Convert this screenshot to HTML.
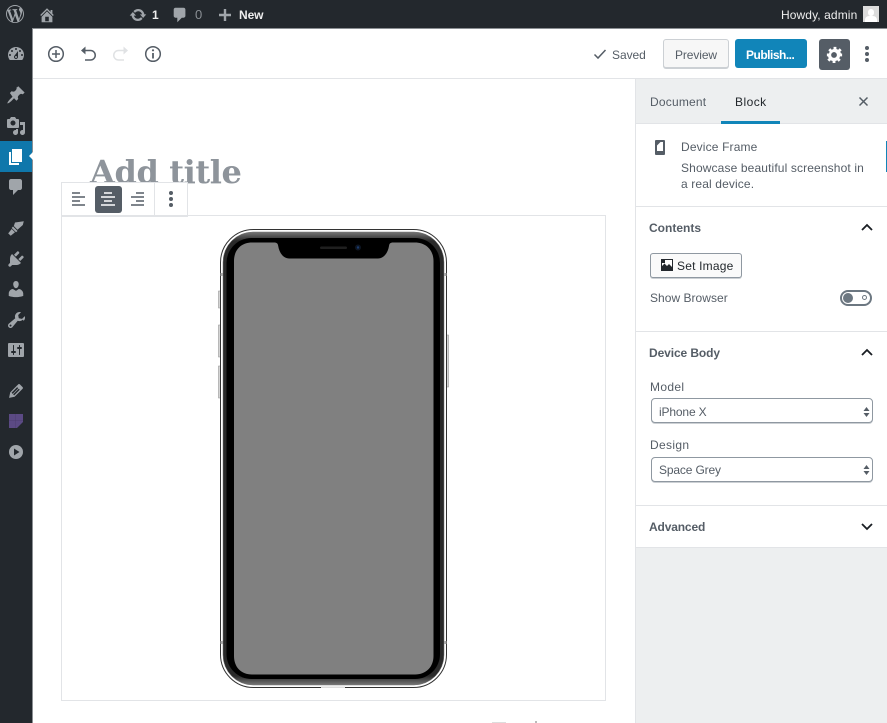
<!DOCTYPE html>
<html><head><meta charset="utf-8">
<style>
html,body{margin:0;padding:0;background:#fff}
body{width:887px;height:723px;position:relative;overflow:hidden;font-family:"Liberation Sans",sans-serif;color:#555d66;font-size:12px}
.a{position:absolute}
.t{position:absolute;white-space:nowrap;line-height:16px;letter-spacing:0}
svg{position:absolute;overflow:visible}
.m{fill:#a0a5aa;fill-rule:evenodd}
.line{position:absolute;background:#e2e4e7;height:1px}
.sel{position:absolute;left:651px;width:220px;height:23px;border:1px solid #8f98a1;border-radius:4px;background:#fff;box-shadow:0 1px 0 #ccd0d4}
</style></head><body>
<!-- Admin bar -->
<div class="a" style="left:0;top:0;width:887px;height:28px;background:#23282d"></div>
<div class="a" style="left:0;top:28px;width:32px;height:695px;background:#23282d"></div>
<div class="a" style="left:32px;top:28px;width:1px;height:695px;background:#8b8f93"></div>
<div class="a" style="left:32px;top:28px;width:855px;height:1px;background:#8b8f93"></div>
<svg style="left:6px;top:5px" width="18" height="18" viewBox="0 0 20 20"><path class="m" d="M20 10c0-5.510-4.490-10-10-10C4.480 0 0 4.490 0 10c0 5.520 4.480 10 10 10 5.510 0 10-4.480 10-10zM7.780 15.370L4.370 6.220c.55-.02 1.170-.08 1.170-.08.500-.06.440-1.130-.060-1.110 0 0-1.450.11-2.370.11-.180 0-.370 0-.580-.01C4.120 2.690 6.890 1.050 10 1.050c2.310 0 4.430.87 6.020 2.320-.040-.010-.080-.010-.120-.010-.870 0-1.490.76-1.490 1.580 0 .730.420 1.350.870 2.080.340.590.730 1.350.730 2.450 0 .760-.300 1.640-.680 2.860l-.890 2.970-3.220-9.570c.54-.03 1.020-.090 1.020-.090.500-.060.440-1.130-.060-1.110 0 0-1.450.11-2.370.11-.850 0-2.300-.110-2.300-.110-.500-.020-.560 1.080-.060 1.110l.920.080 1.260 3.410zM17.410 10c.240-.640.740-1.870.430-4.250.700 1.290 1.050 2.710 1.050 4.250 0 3.290-1.730 6.240-4.480 7.820.990-2.650 1.990-5.170 3-7.820zM6.100 18.090C3.120 16.650 1.110 13.530 1.110 10c0-1.300.230-2.480.72-3.590l4.270 11.680zm4.030-6.630l2.650 7.170c-.880.330-1.790.490-2.780.49-.810 0-1.620-.120-2.420-.380z"/></svg>
<svg style="left:38px;top:6px" width="18" height="18" viewBox="0 0 20 20"><path class="m" d="M16 8.500l1.530 1.530-1.060 1.060L10 4.620l-6.470 6.470-1.060-1.060L10 2.500l4 4v-2h2v4zm-6-2.460l6 5.990V18H4v-5.970zM12 17v-5H8v5h4z"/></svg>
<svg style="left:129px;top:6px" width="18" height="18" viewBox="0 0 20 20"><path class="m" d="M10.200 3.280c3.530 0 6.430 2.610 6.920 6h2.080l-3.500 4-3.500-4h2.320c-.450-1.970-2.210-3.440-4.320-3.440-1.450 0-2.730.710-3.540 1.790L4.950 5.660C6.230 4.200 8.110 3.280 10.200 3.280zm-.400 13.440c-3.520 0-6.430-2.610-6.920-6H.800l3.500-4c1.170 1.330 2.330 2.670 3.500 4H5.480c.450 1.970 2.210 3.440 4.320 3.440 1.450 0 2.730-.710 3.540-1.800l1.710 1.970c-1.280 1.460-3.150 2.390-5.250 2.390z"/></svg>
<div class="t" style="left:152px;top:7px;color:#eee;font-weight:bold;font-size:12px">1</div>
<svg style="left:171px;top:6px" width="18" height="18" viewBox="0 0 20 20"><path class="m" d="M5 2h9c1.100 0 2 .9 2 2v7c0 1.100-.9 2-2 2h-2l-5 5v-5H5c-1.100 0-2-.9-2-2V4c0-1.100.9-2 2-2z"/></svg>
<div class="t" style="left:195px;top:7px;color:#8a8f94;font-size:13px">0</div>
<svg style="left:219px;top:9px" width="12" height="12" viewBox="0 0 12 12"><path d="M4.800 0h2.400v4.800H12v2.400H7.200V12H4.800V7.200H0V4.800h4.800z" fill="#a0a5aa"/></svg>
<div class="t" style="left:239px;top:7px;color:#eee;font-weight:bold;letter-spacing:-.1px">New</div>
<div class="t" style="left:781px;top:7px;color:#eee;font-size:12px;letter-spacing:0.1px">Howdy, admin</div>
<div class="a" style="left:863px;top:6px;width:16px;height:16px;background:#dcdcdc;overflow:hidden"><div class="a" style="left:5px;top:3px;width:6px;height:7px;border-radius:3px;background:#fff"></div><div class="a" style="left:2px;top:10px;width:12px;height:8px;border-radius:4px 4px 0 0;background:#fff"></div></div>
<!-- Side menu -->
<svg style="left:6px;top:44px" width="20" height="20" viewBox="0 0 20 20"><path class="m" d="M3.760 16h12.480c1.100-1.430 1.760-3.210 1.760-5.140C18 6.370 14.420 3 10 3S2 6.370 2 10.860c0 1.930.66 3.710 1.760 5.140zM10 4c.55 0 1 .45 1 1s-.45 1-1 1-1-.45-1-1 .45-1 1-1zM6 6c.55 0 1 .45 1 1s-.45 1-1 1-1-.45-1-1 .45-1 1-1zm8 0c.55 0 1 .45 1 1s-.45 1-1 1-1-.45-1-1 .45-1 1-1zm-5.370 5.550L12 7v6c0 1.100-.9 2-2 2s-2-.9-2-2c0-.57.250-1.080.630-1.450zM4 10c.55 0 1 .45 1 1s-.45 1-1 1-1-.45-1-1 .45-1 1-1zm12 0c.55 0 1 .45 1 1s-.45 1-1 1-1-.45-1-1 .45-1 1-1zm-5 3c0-.55-.45-1-1-1s-1 .45-1 1 .45 1 1 1 1-.45 1-1z"/></svg>
<svg style="left:6px;top:85px" width="20" height="20" viewBox="0 0 20 20"><path class="m" d="M10.440 3.020l1.820-1.820 6.360 6.350-1.830 1.820c-1.050-.68-2.480-.57-3.400.36l-.750.750c-.920.930-1.040 2.350-.350 3.400l-1.830 1.820-2.410-2.410-2.800 2.790c-.420.420-3.380 2.710-3.800 2.290s1.860-3.390 2.280-3.810l2.790-2.790L3.900 8.000l1.820-1.820c1.050.690 2.480.570 3.400-.350l.750-.750c.930-.920 1.040-2.350.370-3.400z"/></svg>
<svg style="left:6px;top:116px" width="20" height="20" viewBox="0 0 20 20"><path class="m" d="M13 11V4c0-.550-.450-1-1-1h-1.670L9 1H5L3.670 3H2c-.550 0-1 .450-1 1v7c0 .550.450 1 1 1h10c.550 0 1-.450 1-1zM7 4.500c1.380 0 2.500 1.120 2.500 2.500S8.380 9.500 7 9.500 4.500 8.380 4.500 7 5.620 4.500 7 4.500zM14 6h5v10.500c0 1.380-1.120 2.500-2.500 2.500S14 17.880 14 16.500s1.120-2.500 2.500-2.500c.170 0 .340.020.500.050V9h-3V6zm-4 8.050V13h2v3.500c0 1.380-1.120 2.500-2.500 2.500S7 17.880 7 16.500 8.120 14 9.500 14c.170 0 .340.020.500.050z"/></svg>
<div class="a" style="left:0;top:141px;width:32px;height:31px;background:#0f77ab"></div>
<div class="a" style="left:29px;top:152px;width:0;height:0;border:4.500px solid transparent;border-right:4px solid #fff;border-left:0"></div>
<svg style="left:6px;top:147px" width="20" height="20" viewBox="0 0 20 20"><path d="M6 15V2h10v13H6zm-1 1h8v2H3V5h2v11z" fill="#fff"/></svg>
<svg style="left:6px;top:177px" width="20" height="20" viewBox="0 0 20 20"><path class="m" d="M5 2h9c1.100 0 2 .9 2 2v7c0 1.100-.9 2-2 2h-2l-5 5v-5H5c-1.100 0-2-.9-2-2V4c0-1.100.9-2 2-2z"/></svg>
<svg style="left:8px;top:220px" width="16" height="16" viewBox="0 0 16 16"><path d="M7 2.500 15.800 1.200 14.800 5 9.500 9.800 5.800 6z" fill="#a0a5aa"/><path d="M5 6.500 9.500 11 8 12.200 3.700 8z" fill="#a0a5aa"/><path d="M3.700 9 7 12.300 2.700 15.800.2 13.400z" fill="#a0a5aa"/></svg>
<svg style="left:6px;top:249px" width="20" height="20" viewBox="0 0 20 20"><path class="m" d="M13.110 4.360L9.870 7.600 8 5.730l3.240-3.240c.350-.340 1.050-.200 1.560.310.520.510.660 1.210.310 1.560zm-8 1.770l.910-1.120 9.010 9.010-1.190.840c-.710.710-2.580 1.160-3.820 1.160H6.140L4.900 17.260c-.590.590-1.540.590-2.120 0-.590-.580-.590-1.530 0-2.120l1.240-1.240v-3.880c0-1.130.400-3.170 1.090-3.890zm7.260 3.970l3.240-3.240c.340-.350 1.040-.210 1.550.300.520.510.660 1.210.310 1.560l-3.240 3.250z"/></svg>
<svg style="left:6px;top:279px" width="20" height="20" viewBox="0 0 20 20"><path class="m" d="M10 9.250c-2.270 0-2.730-3.440-2.730-3.440C7 4.020 7.820 2 9.970 2c2.160 0 2.980 2.020 2.710 3.810 0 0-.410 3.440-2.680 3.440zm0 2.570L12.720 10c2.390 0 4.520 2.330 4.520 4.530v2.490s-3.650 1.130-7.240 1.130c-3.650 0-7.240-1.130-7.240-1.130v-2.490c0-2.250 1.940-4.480 4.150-4.480z"/></svg>
<svg style="left:6px;top:310px" width="20" height="20" viewBox="0 0 20 20"><path class="m" d="M16.680 9.770c-1.340 1.340-3.300 1.670-4.950.990l-5.410 6.520c-.990.990-2.590.990-3.580 0s-.990-2.590 0-3.570l6.520-5.420c-.680-1.650-.350-3.610.990-4.950 1.280-1.280 3.120-1.640 4.730-1.100l-2.810 2.810.640 3.200 3.200.640 2.810-2.810c.540 1.610.180 3.450-1.100 4.730zM3.810 16.210c.400.390 1.040.390 1.430 0 .400-.400.400-1.040 0-1.440-.390-.390-1.030-.390-1.430 0-.390.400-.390 1.040 0 1.440z"/></svg>
<svg style="left:6px;top:340px" width="20" height="20" viewBox="0 0 20 20"><path class="m" d="M18 16V4c0-.55-.45-1-1-1H3c-.55 0-1 .45-1 1v12c0 .55.45 1 1 1h14c.55 0 1-.45 1-1zM8 11h1c.55 0 1 .45 1 1s-.45 1-1 1H8v1.500c0 .28-.22.5-.5.5s-.5-.22-.5-.5V13H6c-.55 0-1-.45-1-1s.45-1 1-1h1V5.500c0-.28.22-.5.5-.5s.5.22.5.5V11zm5-2h-1c-.55 0-1-.45-1-1s.45-1 1-1h1V5.500c0-.28.22-.5.5-.5s.5.22.5.5V7h1c.55 0 1 .45 1 1s-.45 1-1 1h-1v5.500c0 .28-.22.5-.5.5s-.5-.22-.5-.5V9z"/></svg>
<svg style="left:6px;top:381px" width="20" height="20" viewBox="0 0 20 20"><path class="m" d="M13.890 3.390l2.710 2.720c.460.460.420 1.240.030 1.640l-8.010 8.020-5.560 1.160 1.160-5.580s7.600-7.630 7.990-8.030c.390-.390 1.220-.390 1.680.070zm-2.730 2.790l-5.590 5.610 1.110 1.110 5.540-5.650zm-2.970 8.230l5.580-5.600-1.070-1.080-5.590 5.600z"/></svg>
<svg style="left:9px;top:414px" width="14" height="14" viewBox="0 0 14 14"><path d="M0 0h14v8L8 14H0z" fill="#5b4a84"/><path d="M6.700 0v14M0 6.700h14" stroke="#4a3d6c" stroke-width=".4"/></svg>
<svg style="left:9px;top:445px" width="14" height="14" viewBox="0 0 14 14"><circle cx="7" cy="7" r="7" fill="#a0a5aa"/><path d="M5 3.500 10.500 7 5 10.500z" fill="#23282d"/></svg>

<!-- Editor toolbar -->
<div class="line" style="left:33px;top:78px;width:854px"></div>
<svg style="left:47px;top:45px" width="18" height="18" viewBox="0 0 18 18" fill="none" stroke="#555d66" stroke-width="1.500"><circle cx="9" cy="9" r="7.300"/><path d="M9 5v8M5 9h8"/></svg>
<svg style="left:80px;top:46px" width="16" height="16" viewBox="0 0 16 16" fill="none" stroke="#555d66" stroke-width="1.500"><path d="M3 4.500h7.500a3.500 3.500 0 0 1 0 9.500H5"/><path d="M5.500 0.500v8L1 4.500z" fill="#555d66" stroke="none"/></svg>
<svg style="left:113px;top:46px" width="16" height="16" viewBox="0 0 16 16" fill="none" stroke="#e0e2e4" stroke-width="1.500"><path d="M13 4.500H5.500a3.500 3.500 0 0 0 0 9.500H11"/><path d="M10.500 0.500v8L15 4.500z" fill="#e0e2e4" stroke="none"/></svg>
<svg style="left:144px;top:45px" width="18" height="18" viewBox="0 0 18 18" fill="none" stroke="#555d66" stroke-width="1.500"><circle cx="9" cy="9" r="7.300"/><path d="M9 8v5.500" stroke-width="1.800"/><circle cx="9" cy="5.300" r="1.100" fill="#555d66" stroke="none"/></svg>
<svg style="left:593px;top:48px" width="14" height="12" viewBox="0 0 14 12" fill="none" stroke="#555d66" stroke-width="1.500"><path d="M1.500 6.500 5 10 12.500 2"/></svg>
<div class="t" style="left:612px;top:47px;color:#555d66;font-size:12px;letter-spacing:-.05px">Saved</div>
<div class="a" style="left:663px;top:39px;width:64px;height:27px;border:1px solid #ccd0d4;border-radius:3px;background:#f7f7f7;box-shadow:0 1px 0 #ccd0d4"></div>
<div class="t" style="left:675px;top:47px;color:#555d66;font-size:12px;letter-spacing:-.1px">Preview</div>
<div class="a" style="left:735px;top:39px;width:72px;height:29px;border-radius:3px;background:#1185b9"></div>
<div class="t" style="left:746px;top:47px;color:#fff;font-weight:bold;font-size:12px;letter-spacing:-.5px">Publish...</div>
<div class="a" style="left:819px;top:39px;width:31px;height:31px;border-radius:3px;background:#555d66"></div>
<svg style="left:825px;top:45px" width="19" height="19" viewBox="0 0 20 20"><path fill="#fff" fill-rule="evenodd" d="M18 12h-2.180c-.170.700-.440 1.350-.810 1.930l1.540 1.540-2.100 2.100-1.540-1.540c-.580.360-1.230.640-1.910.810V19H8v-2.180c-.680-.170-1.330-.440-1.910-.810l-1.540 1.540-2.100-2.100 1.540-1.540c-.360-.580-.640-1.230-.810-1.910H2V9h2.180c.170-.680.440-1.330.810-1.910L3.450 5.550l2.100-2.100 1.540 1.540c.580-.360 1.230-.640 1.910-.810V2h3v2.180c.680.170 1.330.440 1.910.810l1.540-1.540 2.100 2.100-1.540 1.540c.360.580.640 1.230.810 1.910H18v3zm-8.500 1.500c1.660 0 3-1.340 3-3s-1.340-3-3-3-3 1.340-3 3 1.340 3 3 3z"/></svg>
<div class="a" style="left:865px;top:46px;width:4px;height:4px;border-radius:50%;background:#555d66"></div>
<div class="a" style="left:865px;top:52px;width:4px;height:4px;border-radius:50%;background:#555d66"></div>
<div class="a" style="left:865px;top:58px;width:4px;height:4px;border-radius:50%;background:#555d66"></div>

<!-- Content -->
<div class="a" style="left:90px;top:150px;white-space:nowrap;font-family:'DejaVu Serif',serif;font-weight:bold;font-size:32px;line-height:44px;color:#8e949b;letter-spacing:-.38px">Add title</div>
<div class="a" style="left:61px;top:182px;width:125px;height:33px;background:#fff;border:1px solid #e2e4e7"></div>
<div class="a" style="left:154px;top:183px;width:1px;height:33px;background:#e2e4e7"></div>
<div class="a" style="left:61px;top:215px;width:543px;height:484px;border:1px solid #e2e4e7"></div>
<div class="a" style="left:95px;top:186px;width:27px;height:27px;border-radius:3px;background:#555d66"></div>
<svg style="left:72px;top:192px" width="14" height="14" viewBox="0 0 14 14" stroke="#555d66" stroke-width="1.500"><path d="M0 1h8M0 5h13M0 9h8M0 13h13"/></svg>
<svg style="left:101px;top:192px" width="14" height="14" viewBox="0 0 14 14" stroke="#fff" stroke-width="1.500"><path d="M3 1h8M0 5h14M3 9h8M0 13h14"/></svg>
<svg style="left:131px;top:192px" width="14" height="14" viewBox="0 0 14 14" stroke="#555d66" stroke-width="1.500"><path d="M5 1h8M0 5h13M5 9h8M0 13h13"/></svg>
<div class="a" style="left:169px;top:191px;width:4px;height:4px;border-radius:50%;background:#555d66"></div>
<div class="a" style="left:169px;top:197px;width:4px;height:4px;border-radius:50%;background:#555d66"></div>
<div class="a" style="left:169px;top:203px;width:4px;height:4px;border-radius:50%;background:#555d66"></div>

<!-- Phone -->
<svg style="left:216px;top:226px" width="236" height="466" viewBox="216 226 236 466">
<defs><linearGradient id="rim" x1="0" y1="0" x2="0" y2="1"><stop offset="0" stop-color="#777"/><stop offset=".02" stop-color="#2a2a2a"/><stop offset=".98" stop-color="#2a2a2a"/><stop offset="1" stop-color="#777"/></linearGradient></defs>
<rect x="218.500" y="291" width="3" height="17" fill="#d4d4d4" stroke="#888" stroke-width=".5"/>
<rect x="218.500" y="325" width="3" height="32" fill="#d4d4d4" stroke="#888" stroke-width=".5"/>
<rect x="218.500" y="366" width="3" height="32" fill="#d4d4d4" stroke="#888" stroke-width=".5"/>
<rect x="445.500" y="335" width="3" height="52" fill="#d4d4d4" stroke="#888" stroke-width=".5"/>
<rect x="220.500" y="229.500" width="226" height="458" rx="33" fill="#fff" stroke="#333" stroke-width="1"/>
<rect x="223" y="232" width="221" height="453" rx="30" fill="url(#rim)" stroke="#777" stroke-width=".5"/>
<rect x="226.500" y="238" width="213.500" height="441" rx="25" fill="#000"/>
<path d="M252 242.500H274c3 0 3.800 1 4.200 3.500 1 6.500 5 12.500 11 12.500H378c6 0 10-6 11-12.500.4-2.500 1.200-3.500 4.200-3.500H415C426 242.500 433.500 250 433.500 261V656C433.500 667 426 674.500 415 674.500H252C241 674.500 234 667 234 656V261C234 250 241 242.500 252 242.500z" fill="#808080"/>
<rect x="320" y="246.500" width="27" height="2.500" rx="1.250" fill="#1f1f1f"/>
<circle cx="358" cy="247.500" r="3" fill="#0d1522"/><circle cx="358" cy="247.500" r="1.200" fill="#1a3a6c"/>
<rect x="321" y="686.500" width="24" height="1.500" fill="#ddd"/>
<rect x="220.500" y="273" width="2.500" height="3" fill="#aaa"/><rect x="444" y="273" width="2.500" height="3" fill="#aaa"/>
<rect x="220.500" y="641" width="2.500" height="3" fill="#aaa"/><rect x="444" y="641" width="2.500" height="3" fill="#aaa"/>
</svg>
<div class="a" style="left:492px;top:722px;width:14px;height:1px;background:#ddd"></div>
<div class="a" style="left:535px;top:721px;width:2px;height:2px;background:#bbb"></div>

<!-- Sidebar -->
<div class="a" style="left:635px;top:79px;width:252px;height:644px;background:#edeff0;border-left:1px solid #e2e4e7;box-sizing:border-box"></div>
<div class="a" style="left:635px;top:124px;width:252px;height:423px;background:#fff;border-left:1px solid #e2e4e7;box-sizing:border-box"></div>
<div class="line" style="left:635px;top:123px;width:252px"></div>
<div class="a" style="left:721px;top:121px;width:59px;height:3px;background:#1185b9"></div>
<div class="t" style="left:650px;top:94px;color:#555d66;letter-spacing:.2px">Document</div>
<div class="t" style="left:735px;top:94px;color:#23282d;letter-spacing:.45px">Block</div>
<svg style="left:859px;top:97px" width="9" height="9" viewBox="0 0 9 9" stroke="#555d66" stroke-width="1.500"><path d="M.5.500l8 8M8.500.500l-8 8"/></svg>
<svg style="left:655px;top:140px" width="10" height="15" viewBox="0 0 10 15"><rect x="0" y="0" width="10" height="15" rx="1" fill="#555d66"/><rect x="2" y="2" width="6" height="9" fill="#fff"/><path d="M2 5.500 5.500 2H2z" fill="#555d66"/></svg>
<div class="t" style="left:681px;top:139px;color:#555d66;letter-spacing:.15px">Device Frame</div>
<div class="t" style="left:681px;top:160px;color:#555d66;letter-spacing:.13px">Showcase beautiful screenshot in</div>
<div class="t" style="left:681px;top:176px;color:#555d66;letter-spacing:.13px">a real device.</div>
<div class="line" style="left:635px;top:206px;width:252px"></div>
<div class="t" style="left:649px;top:220px;color:#555d66;font-weight:bold">Contents</div>
<svg style="left:861px;top:223px" width="12" height="8" viewBox="0 0 12 8" fill="none" stroke="#191e23" stroke-width="1.800"><path d="M1 7l5-5 5 5"/></svg>
<div class="a" style="left:650px;top:253px;width:90px;height:23px;border:1px solid #8f98a1;border-radius:3px;background:#fafafa;box-shadow:0 1px 0 #ccd0d4"></div>
<svg style="left:661px;top:259px" width="12" height="12" viewBox="0 0 12 12"><rect x=".5" y=".5" width="11" height="11" fill="#fff" stroke="#23282d"/><path d="M1 11V7l2.500-2.500L6 7l2-2 3 3v3z" fill="#23282d"/><rect x="1" y="1" width="3" height="3" fill="#23282d"/></svg>
<div class="t" style="left:677px;top:258px;color:#23282d;letter-spacing:.2px">Set Image</div>
<div class="t" style="left:650px;top:290px;color:#555d66;letter-spacing:.03px">Show Browser</div>
<div class="a" style="left:840px;top:290px;width:28px;height:12px;border:2px solid #6c7781;border-radius:9px"></div>
<div class="a" style="left:843px;top:293px;width:10px;height:10px;border-radius:50%;background:#6c7781"></div>
<div class="a" style="left:862px;top:295px;width:3px;height:3px;border:1px solid #6c7781;border-radius:50%"></div>
<div class="line" style="left:635px;top:331px;width:252px"></div>
<div class="t" style="left:649px;top:345px;color:#555d66;font-weight:bold;letter-spacing:-.1px">Device Body</div>
<svg style="left:861px;top:348px" width="12" height="8" viewBox="0 0 12 8" fill="none" stroke="#191e23" stroke-width="1.800"><path d="M1 7l5-5 5 5"/></svg>
<div class="t" style="left:650px;top:379px;color:#555d66;letter-spacing:.35px">Model</div>
<div class="sel" style="top:398px"></div>
<div class="t" style="left:659px;top:404px;color:#555d66;letter-spacing:-.15px">iPhone X</div>
<svg style="left:863px;top:407px" width="7" height="10" viewBox="0 0 7 10" fill="#555d66"><path d="M3.500 0 6.500 4H.5zM3.500 10 .5 6h6z"/></svg>
<div class="t" style="left:650px;top:437px;color:#555d66;letter-spacing:.35px">Design</div>
<div class="sel" style="top:457px"></div>
<div class="t" style="left:659px;top:462px;color:#555d66;letter-spacing:-.15px">Space Grey</div>
<svg style="left:863px;top:465px" width="7" height="10" viewBox="0 0 7 10" fill="#555d66"><path d="M3.500 0 6.500 4H.5zM3.500 10 .5 6h6z"/></svg>
<div class="line" style="left:635px;top:505px;width:252px"></div>
<div class="t" style="left:649px;top:519px;color:#555d66;font-weight:bold;letter-spacing:-.15px">Advanced</div>
<svg style="left:861px;top:523px" width="12" height="8" viewBox="0 0 12 8" fill="none" stroke="#191e23" stroke-width="1.800"><path d="M1 1l5 5 5-5"/></svg>
<div class="line" style="left:635px;top:547px;width:252px"></div>
<div class="a" style="left:886px;top:141px;width:1px;height:31px;background:#1185b9"></div>
</body></html>
